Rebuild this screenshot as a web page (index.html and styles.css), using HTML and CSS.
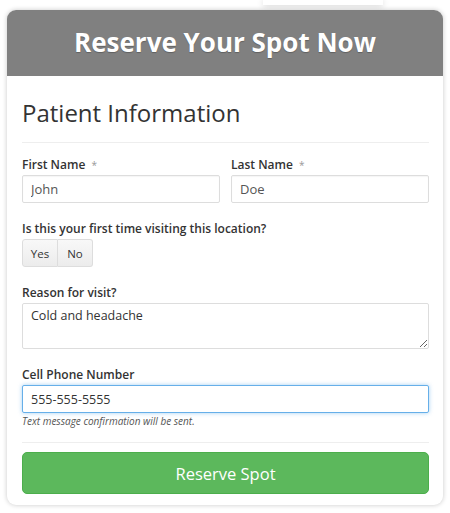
FILE: index.html
```html
<!DOCTYPE html>
<html>
<head>
<meta charset="utf-8">
<link rel="stylesheet" href="styles.css">
</head>
<body>
<div class="prev-box"></div>
<div class="card">
  <div class="card-header">
    <h1 class="card-title">Reserve Your Spot Now</h1>
  </div>
  <form class="card-body">
    <h2 class="section-title">Patient Information</h2>
    <hr class="divider">
    <div class="row">
      <div class="field">
        <label class="label">First Name <span class="req">*</span></label>
        <input class="input" type="text" value="John">
      </div>
      <div class="field">
        <label class="label">Last Name <span class="req">*</span></label>
        <input class="input" type="text" value="Doe">
      </div>
    </div>
    <div class="field gap">
      <label class="label">Is this your first time visiting this location?</label>
      <div class="btn-group">
        <button type="button" class="btn-opt">Yes</button>
        <button type="button" class="btn-opt">No</button>
      </div>
    </div>
    <div class="field gap">
      <label class="label">Reason for visit?</label>
      <textarea class="textarea">Cold and headache</textarea>
    </div>
    <div class="field gap">
      <label class="label">Cell Phone Number</label>
      <input class="input input-focus" type="text" value="555-555-5555">
      <p class="help">Text message confirmation will be sent.</p>
    </div>
    <hr class="divider divider-bottom">
    <button type="button" class="btn-submit">Reserve Spot</button>
  </form>
</div>
</body>
</html>
```

FILE: styles.css
```css
* { box-sizing: border-box; }
html, body {
  margin: 0;
  padding: 0;
  background: #fff;
  font-family: "Open Sans", "Liberation Sans", sans-serif;
  color: #333;
}
body { padding-bottom: 8px; }

.prev-box {
  width: 120px;
  height: 5px;
  margin-left: 263px;
  background: #fff;
  box-shadow: 0 1px 6px rgba(0,0,0,0.18);
}

.card {
  width: 436px;
  margin: 5px 0 0 7px;
  background: #fff;
  border-radius: 9px;
  box-shadow: 0 0 5px rgba(0,0,0,0.22);
  overflow: hidden;
}

.card-header {
  background: #808080;
  height: 66px;
  display: flex;
  align-items: center;
  justify-content: center;
}
.card-title {
  margin: 0;
  color: #fff;
  font-size: 26px;
  font-weight: 700;
  line-height: 1;
  text-shadow: 0 1px 1px rgba(0,0,0,0.25);
  padding-bottom: 2px;
}

.card-body {
  display: flex;
  flex-direction: column;
  padding: 20px 14px 11px 15px;
  margin: 0;
}

.section-title {
  margin: 0;
  font-size: 24px;
  font-weight: 400;
  line-height: 34px;
  color: #333;
}

.divider {
  border: 0;
  border-top: 1px solid #eee;
  margin: 12px 0 0;
  height: 0;
}
.divider-bottom { margin-top: 15px; }

.row {
  display: grid;
  grid-template-columns: 1fr 1fr;
  column-gap: 11px;
  margin-top: 13px;
}

.field { display: flex; flex-direction: column; }
.gap { margin-top: 17px; }

.label {
  font-size: 12px;
  font-weight: 600;
  line-height: 18px;
  margin-bottom: 1px;
  color: #333;
}
.req {
  color: #999;
  font-weight: 400;
  font-size: 10px;
  margin-left: 3px;
}

.input {
  height: 28px;
  border: 1px solid #ddd;
  border-radius: 2px;
  padding: 0 8px;
  font-family: inherit;
  font-size: 13px;
  color: #555;
  background: #fff;
  box-shadow: inset 0 1px 1px rgba(0,0,0,0.04);
  width: 100%;
}
.input-focus {
  border-color: #66afe9;
  box-shadow: 0 0 4px rgba(102,175,233,0.6);
  color: #333;
  font-size: 12.5px;
}

.btn-group { display: flex; }
.btn-opt {
  height: 28px;
  font-family: inherit;
  font-size: 11.5px;
  color: #333;
  background: linear-gradient(#f8f8f8, #ececec);
  border: 1px solid #ddd;
  border-radius: 0;
}
.btn-opt:first-child { border-radius: 3px 0 0 3px; width: 36px; padding: 0; }
.btn-opt:last-child { border-radius: 0 3px 3px 0; border-left: 0; width: 35px; padding: 0; }

.textarea {
  height: 46px;
  border: 1px solid #ddd;
  border-radius: 2px;
  padding: 3px 8px;
  font-family: inherit;
  font-size: 12.5px;
  color: #333;
  resize: vertical;
  width: 100%;
}

.help {
  margin: 2px 0 0;
  font-size: 10px;
  font-style: italic;
  line-height: 12px;
  color: #555;
}

.btn-submit {
  margin-top: 9px;
  height: 42px;
  width: 100%;
  background: #5cb85c;
  border: 1px solid #4cae4c;
  border-radius: 5px;
  color: #fff;
  font-family: inherit;
  font-size: 16.5px;
}
```
